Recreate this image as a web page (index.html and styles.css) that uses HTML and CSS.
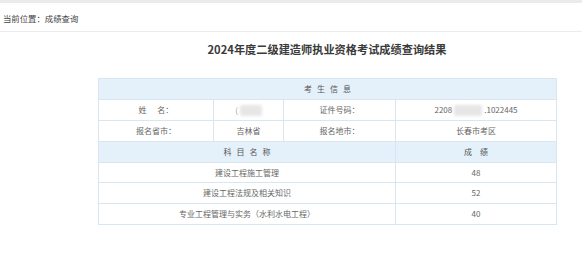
FILE: index.html
```html
<!DOCTYPE html>
<html lang="zh-CN">
<head>
<meta charset="utf-8">
<title>成绩查询</title>
<link rel="stylesheet" href="styles.css">
</head>
<body>
<div class="topbar"></div>
<div class="crumb">当前位置：成绩查询</div>
<main class="main">
  <h1 class="title">2024年度二级建造师执业资格考试成绩查询结果</h1>
  <table class="grid">
    <colgroup>
      <col class="c1"><col class="c2"><col class="c3"><col class="c4">
    </colgroup>
    <tr class="head"><td colspan="4" class="spaced">考生信息</td></tr>
    <tr>
      <td>姓&nbsp;&nbsp;&nbsp;&nbsp;&nbsp;&nbsp;名：</td>
      <td><span class="dim">(</span><span class="blur b1"></span></td>
      <td>证件号码：</td>
      <td>2208<span class="blur b2"></span>.1022445</td>
    </tr>
    <tr>
      <td>报名省市：</td>
      <td>吉林省</td>
      <td>报名地市：</td>
      <td>长春市考区</td>
    </tr>
    <tr class="head"><td colspan="3" class="spaced">科目名称</td><td class="spaced2">成绩</td></tr>
    <tr><td colspan="3">建设工程施工管理</td><td>48</td></tr>
    <tr><td colspan="3">建设工程法规及相关知识</td><td>52</td></tr>
    <tr><td colspan="3">专业工程管理与实务（水利水电工程）</td><td>40</td></tr>
  </table>
</main>
</body>
</html>
```
FILE: styles.css
```css
html, body {
  margin: 0;
  padding: 0;
  background: #fff;
  font-family: "Noto Sans CJK SC", "Noto Sans", sans-serif;
  color: #555;
}
.topbar {
  height: 3px;
  background: #ebebeb;
}
.crumb {
  height: 28px;
  line-height: 30px;
  padding-left: 3px;
  font-size: 8.4px;
  color: #444;
  border-bottom: 1px solid #ececec;
}
.main {
  padding-left: 98px;
  width: 458px;
}
.title {
  margin: 9px 0 0;
  height: 37px;
  line-height: 16px;
  padding-top: 0;
  text-align: center;
  font-size: 11.2px;
  font-weight: bold;
  color: #3a3a3a;
  box-sizing: border-box;
}
.grid {
  width: 458px;
  border-collapse: collapse;
  table-layout: fixed;
  font-size: 8px;
  color: #666;
}
.c1 { width: 115px; }
.c2 { width: 70px; }
.c3 { width: 112px; }
.c4 { width: 161px; }
.grid td {
  border: 1px solid #d8e6f2;
  height: 19.9px;
  padding: 0;
  text-align: center;
  vertical-align: middle;
  line-height: 12px;
}
.grid .head td {
  background: #e4f1fb;
  color: #555;
}
.spaced { letter-spacing: 5px; padding-left: 5px !important; }
.spaced2 { letter-spacing: 8px; padding-left: 8px !important; }
.dim { color: #999; margin-right: 2px; }
.blur {
  display: inline-block;
  vertical-align: middle;
  background: #e6e6e6;
  border-radius: 2px;
  filter: blur(1.5px);
}
.b1 { width: 22px; height: 11px; }
.b2 { width: 28px; height: 11px; margin: 0 2px; }
```
